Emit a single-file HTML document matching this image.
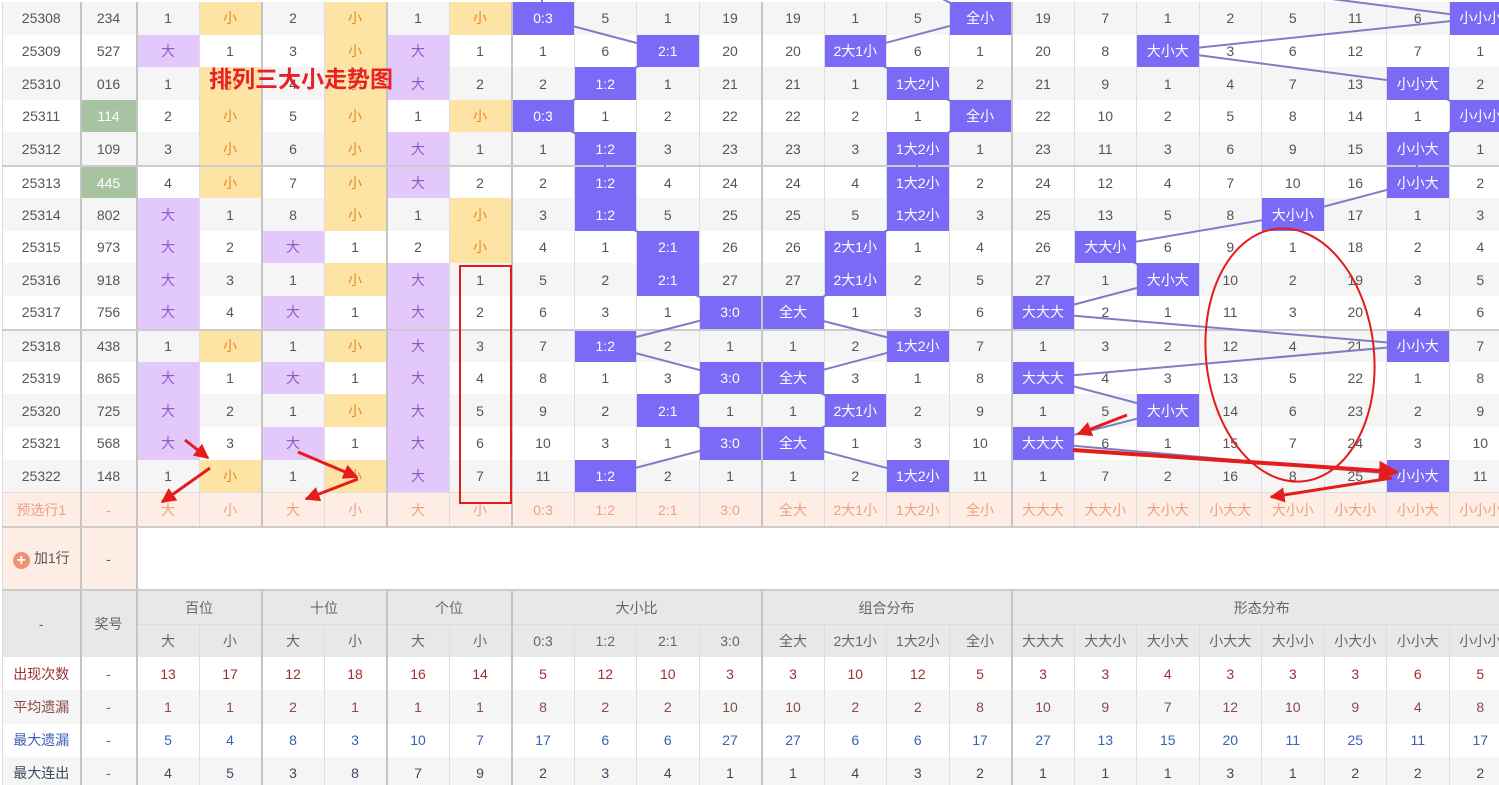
<!DOCTYPE html>
<html><head><meta charset="utf-8">
<style>
html,body{margin:0;padding:0;width:1499px;height:785px;overflow:hidden;background:#fff;}
body{position:relative;font-family:"Liberation Sans","Noto Sans CJK SC",sans-serif;}
table{position:absolute;left:2px;top:2px;border-collapse:collapse;table-layout:fixed;width:1510px;font-size:14px;color:#555;}
td{text-align:center;vertical-align:middle;padding:0;border-left:1px solid #ddd;border-right:1px solid #ddd;height:32.62px;white-space:nowrap;overflow:hidden;}
col.g{border-left:2px solid #c4c4c4;}
tr.e td{background:#f5f5f5;}
tr.sep td{border-top:2px solid #ccc;height:31.2px;}
td.y{background:#fde4a4 !important;color:#e58a22;}
td.p{background:#e2c8fb !important;color:#8a5cc8;}
td.b{background:#7b6af5 !important;color:#fff;position:relative;z-index:2;}
td.n{background:#a7c3a1 !important;color:#fff;}
tr.pre td{background:#fdede5;color:#ef9f80;border-top:1px solid #ddd;height:32.5px;}
tr.add td{height:61.5px;border-top:2px solid #ccc;}
tr.add td.pk{background:#fdede5;color:#555;}
tr.h td{background:#e8e8e8;color:#666;border-top:2px solid #ccc;height:32.5px;}
tr.h2 td{border-top:1px solid #ddd;}
tr.s td{height:33.2px;}
.r1 td{color:#a03030;} .r2 td{color:#8a4a48;} .r3 td{color:#3a62b4;} .r4 td{color:#3c4a60;}
.r1 td:nth-child(2),.r2 td:nth-child(2),.r3 td:nth-child(2),.r4 td:nth-child(2){color:#666;}
.plus{display:inline-block;width:17px;height:17px;border-radius:50%;background:#f09070;color:#fff;font-size:16px;line-height:17px;font-weight:bold;vertical-align:-2px;margin-right:4px;}
svg{position:absolute;left:0;top:0;}
</style></head><body>
<svg width="1499" height="785" style="z-index:1">
<g stroke="#7f7cc4" stroke-width="2" fill="none">
<polyline points="542,-14 542,18 667,51 605,84 542,116 605,149 605,182 605,215 667,247 667,280 730,313 605,345 730,378 667,411 730,443 605,476"/>
<polyline points="917,-14 980,18 855,51 917,84 980,116 917,149 917,182 917,215 855,247 855,280 792,313 917,345 792,378 855,411 792,443 917,476"/>
<polyline points="1230,-14 1480,18 1167,51 1417,84 1480,116 1417,149 1417,182 1292,215 1105,247 1167,280 1042,313 1417,345 1042,378 1167,411 1042,443 1417,476"/>
</g></svg>
<table>
<colgroup><col style="width:78px"><col class="g" style="width:56px"><col class="g" style="width:62.5px"><col style="width:62.5px"><col class="g" style="width:62.5px"><col style="width:62.5px"><col class="g" style="width:62.5px"><col style="width:62.5px"><col class="g" style="width:62.5px"><col style="width:62.5px"><col style="width:62.5px"><col style="width:62.5px"><col class="g" style="width:62.5px"><col style="width:62.5px"><col style="width:62.5px"><col style="width:62.5px"><col class="g" style="width:62.5px"><col style="width:62.5px"><col style="width:62.5px"><col style="width:62.5px"><col style="width:62.5px"><col style="width:62.5px"><col style="width:62.5px"><col style="width:62.5px"></colgroup>
<tr class="e"><td>25308</td><td>234</td><td>1</td><td class="y">小</td><td>2</td><td class="y">小</td><td>1</td><td class="y">小</td><td class="b">0:3</td><td>5</td><td>1</td><td>19</td><td>19</td><td>1</td><td>5</td><td class="b">全小</td><td>19</td><td>7</td><td>1</td><td>2</td><td>5</td><td>11</td><td>6</td><td class="b">小小小</td></tr>
<tr><td>25309</td><td>527</td><td class="p">大</td><td>1</td><td>3</td><td class="y">小</td><td class="p">大</td><td>1</td><td>1</td><td>6</td><td class="b">2:1</td><td>20</td><td>20</td><td class="b">2大1小</td><td>6</td><td>1</td><td>20</td><td>8</td><td class="b">大小大</td><td>3</td><td>6</td><td>12</td><td>7</td><td>1</td></tr>
<tr class="e"><td>25310</td><td>016</td><td>1</td><td class="y">小</td><td>4</td><td class="y">小</td><td class="p">大</td><td>2</td><td>2</td><td class="b">1:2</td><td>1</td><td>21</td><td>21</td><td>1</td><td class="b">1大2小</td><td>2</td><td>21</td><td>9</td><td>1</td><td>4</td><td>7</td><td>13</td><td class="b">小小大</td><td>2</td></tr>
<tr><td>25311</td><td class="n">114</td><td>2</td><td class="y">小</td><td>5</td><td class="y">小</td><td>1</td><td class="y">小</td><td class="b">0:3</td><td>1</td><td>2</td><td>22</td><td>22</td><td>2</td><td>1</td><td class="b">全小</td><td>22</td><td>10</td><td>2</td><td>5</td><td>8</td><td>14</td><td>1</td><td class="b">小小小</td></tr>
<tr class="e"><td>25312</td><td>109</td><td>3</td><td class="y">小</td><td>6</td><td class="y">小</td><td class="p">大</td><td>1</td><td>1</td><td class="b">1:2</td><td>3</td><td>23</td><td>23</td><td>3</td><td class="b">1大2小</td><td>1</td><td>23</td><td>11</td><td>3</td><td>6</td><td>9</td><td>15</td><td class="b">小小大</td><td>1</td></tr>
<tr class="sep"><td>25313</td><td class="n">445</td><td>4</td><td class="y">小</td><td>7</td><td class="y">小</td><td class="p">大</td><td>2</td><td>2</td><td class="b">1:2</td><td>4</td><td>24</td><td>24</td><td>4</td><td class="b">1大2小</td><td>2</td><td>24</td><td>12</td><td>4</td><td>7</td><td>10</td><td>16</td><td class="b">小小大</td><td>2</td></tr>
<tr class="e"><td>25314</td><td>802</td><td class="p">大</td><td>1</td><td>8</td><td class="y">小</td><td>1</td><td class="y">小</td><td>3</td><td class="b">1:2</td><td>5</td><td>25</td><td>25</td><td>5</td><td class="b">1大2小</td><td>3</td><td>25</td><td>13</td><td>5</td><td>8</td><td class="b">大小小</td><td>17</td><td>1</td><td>3</td></tr>
<tr><td>25315</td><td>973</td><td class="p">大</td><td>2</td><td class="p">大</td><td>1</td><td>2</td><td class="y">小</td><td>4</td><td>1</td><td class="b">2:1</td><td>26</td><td>26</td><td class="b">2大1小</td><td>1</td><td>4</td><td>26</td><td class="b">大大小</td><td>6</td><td>9</td><td>1</td><td>18</td><td>2</td><td>4</td></tr>
<tr class="e"><td>25316</td><td>918</td><td class="p">大</td><td>3</td><td>1</td><td class="y">小</td><td class="p">大</td><td>1</td><td>5</td><td>2</td><td class="b">2:1</td><td>27</td><td>27</td><td class="b">2大1小</td><td>2</td><td>5</td><td>27</td><td>1</td><td class="b">大小大</td><td>10</td><td>2</td><td>19</td><td>3</td><td>5</td></tr>
<tr><td>25317</td><td>756</td><td class="p">大</td><td>4</td><td class="p">大</td><td>1</td><td class="p">大</td><td>2</td><td>6</td><td>3</td><td>1</td><td class="b">3:0</td><td class="b">全大</td><td>1</td><td>3</td><td>6</td><td class="b">大大大</td><td>2</td><td>1</td><td>11</td><td>3</td><td>20</td><td>4</td><td>6</td></tr>
<tr class="e sep"><td>25318</td><td>438</td><td>1</td><td class="y">小</td><td>1</td><td class="y">小</td><td class="p">大</td><td>3</td><td>7</td><td class="b">1:2</td><td>2</td><td>1</td><td>1</td><td>2</td><td class="b">1大2小</td><td>7</td><td>1</td><td>3</td><td>2</td><td>12</td><td>4</td><td>21</td><td class="b">小小大</td><td>7</td></tr>
<tr><td>25319</td><td>865</td><td class="p">大</td><td>1</td><td class="p">大</td><td>1</td><td class="p">大</td><td>4</td><td>8</td><td>1</td><td>3</td><td class="b">3:0</td><td class="b">全大</td><td>3</td><td>1</td><td>8</td><td class="b">大大大</td><td>4</td><td>3</td><td>13</td><td>5</td><td>22</td><td>1</td><td>8</td></tr>
<tr class="e"><td>25320</td><td>725</td><td class="p">大</td><td>2</td><td>1</td><td class="y">小</td><td class="p">大</td><td>5</td><td>9</td><td>2</td><td class="b">2:1</td><td>1</td><td>1</td><td class="b">2大1小</td><td>2</td><td>9</td><td>1</td><td>5</td><td class="b">大小大</td><td>14</td><td>6</td><td>23</td><td>2</td><td>9</td></tr>
<tr><td>25321</td><td>568</td><td class="p">大</td><td>3</td><td class="p">大</td><td>1</td><td class="p">大</td><td>6</td><td>10</td><td>3</td><td>1</td><td class="b">3:0</td><td class="b">全大</td><td>1</td><td>3</td><td>10</td><td class="b">大大大</td><td>6</td><td>1</td><td>15</td><td>7</td><td>24</td><td>3</td><td>10</td></tr>
<tr class="e"><td>25322</td><td>148</td><td>1</td><td class="y">小</td><td>1</td><td class="y">小</td><td class="p">大</td><td>7</td><td>11</td><td class="b">1:2</td><td>2</td><td>1</td><td>1</td><td>2</td><td class="b">1大2小</td><td>11</td><td>1</td><td>7</td><td>2</td><td>16</td><td>8</td><td>25</td><td class="b">小小大</td><td>11</td></tr>
<tr class="pre"><td>预选行1</td><td>-</td><td>大</td><td>小</td><td>大</td><td>小</td><td>大</td><td>小</td><td>0:3</td><td>1:2</td><td>2:1</td><td>3:0</td><td>全大</td><td>2大1小</td><td>1大2小</td><td>全小</td><td>大大大</td><td>大大小</td><td>大小大</td><td>小大大</td><td>大小小</td><td>小大小</td><td>小小大</td><td>小小小</td></tr>
<tr class="add"><td class="pk"><span class="plus">+</span>加1行</td><td class="pk">-</td><td colspan="22" style="background:#fff"></td></tr>
<tr class="h"><td rowspan="2">-</td><td rowspan="2">奖号</td><td colspan="2">百位</td><td colspan="2">十位</td><td colspan="2">个位</td><td colspan="4">大小比</td><td colspan="4">组合分布</td><td colspan="8">形态分布</td></tr>
<tr class="h h2"><td>大</td><td>小</td><td>大</td><td>小</td><td>大</td><td>小</td><td>0:3</td><td>1:2</td><td>2:1</td><td>3:0</td><td>全大</td><td>2大1小</td><td>1大2小</td><td>全小</td><td>大大大</td><td>大大小</td><td>大小大</td><td>小大大</td><td>大小小</td><td>小大小</td><td>小小大</td><td>小小小</td></tr>
<tr class="s r1"><td>出现次数</td><td>-</td><td>13</td><td>17</td><td>12</td><td>18</td><td>16</td><td>14</td><td>5</td><td>12</td><td>10</td><td>3</td><td>3</td><td>10</td><td>12</td><td>5</td><td>3</td><td>3</td><td>4</td><td>3</td><td>3</td><td>3</td><td>6</td><td>5</td></tr>
<tr class="s r2 e"><td>平均遗漏</td><td>-</td><td>1</td><td>1</td><td>2</td><td>1</td><td>1</td><td>1</td><td>8</td><td>2</td><td>2</td><td>10</td><td>10</td><td>2</td><td>2</td><td>8</td><td>10</td><td>9</td><td>7</td><td>12</td><td>10</td><td>9</td><td>4</td><td>8</td></tr>
<tr class="s r3"><td>最大遗漏</td><td>-</td><td>5</td><td>4</td><td>8</td><td>3</td><td>10</td><td>7</td><td>17</td><td>6</td><td>6</td><td>27</td><td>27</td><td>6</td><td>6</td><td>17</td><td>27</td><td>13</td><td>15</td><td>20</td><td>11</td><td>25</td><td>11</td><td>17</td></tr>
<tr class="s r4 e"><td>最大连出</td><td>-</td><td>4</td><td>5</td><td>3</td><td>8</td><td>7</td><td>9</td><td>2</td><td>3</td><td>4</td><td>1</td><td>1</td><td>4</td><td>3</td><td>2</td><td>1</td><td>1</td><td>1</td><td>3</td><td>1</td><td>2</td><td>2</td><td>2</td></tr>
</table>
<svg width="1499" height="785" style="z-index:5">
<defs><marker id="a" viewBox="0 0 10 10" refX="9" refY="5" markerWidth="5" markerHeight="5" orient="auto"><path d="M0,0 L10,5 L0,10 z" fill="#e51c1c"/></marker></defs>
<text x="209" y="87" font-family="Liberation Sans,Noto Sans CJK SC,sans-serif" font-size="23" font-weight="bold" fill="#e8202a">排列三大小走势图</text>
<rect x="460" y="266" width="51" height="237" fill="none" stroke="#e51c1c" stroke-width="2"/>
<ellipse cx="1290" cy="355" rx="84" ry="127" fill="none" stroke="#e51c1c" stroke-width="2" transform="rotate(-6 1290 355)"/>
<g stroke="#e51c1c" stroke-width="3" fill="none" marker-end="url(#a)">
<line x1="185" y1="440" x2="208" y2="458"/>
<line x1="210" y1="468" x2="162" y2="502"/>
<line x1="298" y1="452" x2="357" y2="477"/>
<line x1="358" y1="479" x2="306" y2="499"/>
<line x1="1127" y1="415" x2="1078" y2="434"/>
<line x1="1073" y1="450" x2="1397" y2="472" stroke-width="4"/>
<line x1="1392" y1="478" x2="1271" y2="497"/>
</g>
</svg>
</body></html>
